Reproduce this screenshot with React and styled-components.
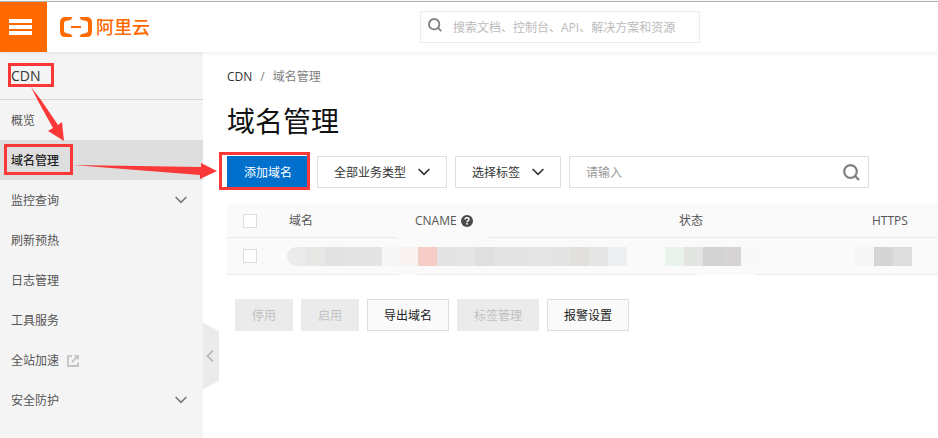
import React from 'react'
import styled, { createGlobalStyle } from 'styled-components'

const menu = [
  { label: '概览' },
  { label: '域名管理', active: true },
  { label: '监控查询', group: true },
  { label: '刷新预热' },
  { label: '日志管理' },
  { label: '工具服务' },
  { label: '全站加速', external: true },
  { label: '安全防护', group: true }
]

const domainBlocks = ['#ebebeb', '#e7e7e5', '#e2e2e2', '#e4e4e4', '#e4e4e4', '#f6f6f6']
const cnameBlocks = ['#f8f2f0', '#f6ccc6', '#e4e4e4', '#e6e6e6', '#dfdfdf', '#e4e4e4', '#e4e4e4', '#e5e5e5', '#e3e3e3', '#e1e0dc', '#e6e6e6', '#edeff1']
const statusBlocks = ['#e9f3ec', '#e2e5e1', '#d2d2d2', '#d6d3d4', '#f8f8f8']
const httpsBlocks = ['#f6f6f6', '#d5d5d5', '#dddddd']

function Chevron () {
  return (
    <svg width='12' height='8' viewBox='0 0 12 8' fill='none' stroke='currentColor' strokeWidth='1.6' aria-hidden='true'>
      <path d='M0.6 1 L6 6.4 L11.4 1' />
    </svg>
  )
}

function Magnifier () {
  return (
    <svg width='17' height='17' viewBox='0 0 17 17' fill='none' stroke='currentColor' strokeWidth='2.2' aria-hidden='true'>
      <circle cx='7.5' cy='7.5' r='6.3' />
      <path d='M11.8 11.8 L16 16' />
    </svg>
  )
}

function Logo () {
  return (
    <svg width='32' height='20' viewBox='0 0 32 20' fill='#ff6a00' aria-hidden='true'>
      <path d='M12.5 0 H5.5 Q0 0 0 5.5 V14.5 Q0 20 5.5 20 H12.5 L11 17.2 L5.8 16 Q4 15.5 4 14 V6 Q4 4.5 5.8 4 L11 2.8 Z' />
      <path d='M19.5 0 H26.5 Q32 0 32 5.5 V14.5 Q32 20 26.5 20 H19.5 L21 17.2 L26.2 16 Q28 15.5 28 14 V6 Q28 4.5 26.2 4 L21 2.8 Z' />
      <rect x='11' y='9' width='10' height='2' />
    </svg>
  )
}

function External () {
  return (
    <svg width='12' height='12' viewBox='0 0 12 12' fill='none' stroke='#c4c4c4' strokeWidth='1.8' aria-hidden='true'>
      <path d='M5 1.2 H1 V11 H11 V7.4' />
      <path d='M5 7 L10.6 1.4 M7.4 0.9 H11.1 V4.6' />
    </svg>
  )
}

function Redacted ({ blocks, start, soft }) {
  return (
    <Mosaic $start={start} $soft={soft}>
      {blocks.map((color, i) => <Block key={i} $color={color} />)}
    </Mosaic>
  )
}

function Filter ({ label, options }) {
  return (
    <SelectWrap>
      <Select aria-label={label}>
        {options.map(option => <option key={option}>{option}</option>)}
      </Select>
      <Chevron />
    </SelectWrap>
  )
}

function Annotations () {
  return (
    <Overlay width='320' height='200' viewBox='0 0 320 200' aria-hidden='true'>
      <g fill='none' stroke='#fb3838' strokeWidth='3'>
        <rect x='9.5' y='64.5' width='43' height='21' />
        <rect x='5.5' y='145.5' width='66' height='28' />
        <rect x='220.5' y='153.5' width='88' height='35' />
      </g>
      <g fill='#fb3838'>
        <polygon points='31,87 41,100 58,125 62,122 64,141 48,131 53,128 38,101' />
        <polygon points='73,165 201,167 201,163 217,171 200,179 200,175' />
      </g>
    </Overlay>
  )
}

export default function App () {
  return (
    <Page>
      <GlobalStyle />
      <Header>
        <MenuButton type='button' aria-label='菜单'>
          <span /><span /><span />
        </MenuButton>
        <Brand>
          <BrandLink href='#home'><Logo />阿里云</BrandLink>
        </Brand>
        <HeaderSearch>
          <Magnifier />
          <input type='search' aria-label='搜索' placeholder='搜索文档、控制台、API、解决方案和资源' />
        </HeaderSearch>
      </Header>
      <Body>
        <Sidebar>
          <Product>CDN</Product>
          <nav>
            {menu.map(item => (
              <MenuItem key={item.label} href='#menu' $active={item.active}>
                {item.label}
                {item.external && <External />}
                {item.group && <Push><Chevron /></Push>}
              </MenuItem>
            ))}
          </nav>
          <Collapse type='button' aria-label='收起'>
            <svg width='8' height='12' viewBox='0 0 8 12' fill='none' stroke='#b5b5b5' strokeWidth='1.5'>
              <path d='M7 0.6 L1.4 6 L7 11.4' />
            </svg>
          </Collapse>
        </Sidebar>
        <Main>
          <Breadcrumb>
            <a href='#cdn'>CDN</a>
            <span>/</span>
            <span>域名管理</span>
          </Breadcrumb>
          <Title>域名管理</Title>
          <Toolbar>
            <Button type='button' $primary>添加域名</Button>
            <Filter label='业务类型' options={['全部业务类型']} />
            <Filter label='标签' options={['选择标签']} />
            <TableSearch>
              <input type='text' aria-label='域名' placeholder='请输入' />
              <button type='button' aria-label='查询'><Magnifier /></button>
            </TableSearch>
          </Toolbar>
          <Table>
            <colgroup>
              <col width='46' />
              <col width='126' />
              <col width='264' />
              <col width='193' />
              <col />
            </colgroup>
            <thead>
              <tr>
                <Th><Checkbox type='checkbox' aria-label='全选' /></Th>
                <Th>域名</Th>
                <Th>
                  <Help>
                    CNAME
                    <svg width='12' height='12' viewBox='0 0 12 12' aria-hidden='true'>
                      <circle cx='6' cy='6' r='6' fill='#4a4a4a' />
                      <path d='M4 4.6 Q4 2.8 6 2.8 Q8 2.8 8 4.4 Q8 5.4 6.9 5.9 Q6 6.3 6 7.2' fill='none' stroke='#fff' strokeWidth='1.4' />
                      <rect x='5.2' y='8' width='1.6' height='1.6' fill='#fff' />
                    </svg>
                  </Help>
                  <Smudge $left={-2} $width={89} />
                </Th>
                <Th>状态</Th>
                <Th>HTTPS</Th>
              </tr>
            </thead>
            <tbody>
              <tr>
                <Td $check><Checkbox type='checkbox' aria-label='选择域名' /></Td>
                <Td><Redacted blocks={domainBlocks} start={14} soft /></Td>
                <Td><Redacted blocks={cnameBlocks} start={0} /><Smudge $left={0} $width={18} /></Td>
                <Td><Redacted blocks={statusBlocks} start={2} /><Smudge $left={34} $width={59} /></Td>
                <Td><Redacted blocks={httpsBlocks} start={-1} /></Td>
              </tr>
            </tbody>
          </Table>
          <Actions>
            <Button type='button' disabled>停用</Button>
            <Button type='button' disabled>启用</Button>
            <Button type='button'>导出域名</Button>
            <Button type='button' disabled>标签管理</Button>
            <Button type='button'>报警设置</Button>
          </Actions>
        </Main>
      </Body>
      <Annotations />
    </Page>
  )
}

const GlobalStyle = createGlobalStyle`
  * {
    box-sizing: border-box;
  }

  body {
    background-color: #fff;
    color: #333;
    font-family: 'Open Sans', 'Noto Sans CJK SC', sans-serif;
    font-size: 12px;
    line-height: 16px;
    margin: 0;
  }

  button, input, select {
    border-radius: 0;
    font: inherit;
    margin: 0;
  }

  a {
    color: inherit;
    text-decoration: none;
  }

  svg {
    display: block;
    flex: none;
  }
`

const Page = styled.div`
  display: flex;
  flex-direction: column;
  min-height: 100vh;
  padding-top: 1px;
  position: relative;
`

const Header = styled.header`
  align-items: center;
  border-top: 1px solid #b0b0b0;
  box-shadow: 0 1px 4px rgba(0, 0, 0, 0.08);
  display: flex;
  height: 51px;
  position: relative;
  z-index: 1;
`

const MenuButton = styled.button`
  align-items: flex-start;
  align-self: stretch;
  background-color: #ff6a00;
  border: 0;
  display: flex;
  flex: none;
  flex-direction: column;
  gap: 2px;
  justify-content: center;
  padding: 0 0 0 9px;
  width: 47px;

  span {
    background-color: #fff;
    height: 4px;
    width: 23px;
  }
`

const Brand = styled.div`
  flex: 0 0 373px;
  padding: 2px 0 0 13px;
`

const BrandLink = styled.a`
  align-items: center;
  color: #ff6a00;
  display: inline-flex;
  font-size: 18px;
  font-weight: 500;
  gap: 4px;
  line-height: 24px;
`

const HeaderSearch = styled.label`
  align-items: center;
  border: 1px solid #ebebeb;
  color: #808080;
  display: flex;
  gap: 11px;
  height: 32px;
  padding: 0 7px;
  width: 280px;

  svg {
    height: 14px;
    margin-bottom: 4px;
    width: 14px;
  }

  input {
    background: none;
    border: 0;
    flex: 1;
    min-width: 0;
    outline: 0;
    padding: 2px 0 0;
  }

  input::placeholder {
    color: #bbb;
  }
`

const Body = styled.div`
  display: flex;
  flex: 1;
`

const Sidebar = styled.aside`
  background-color: #f4f4f4;
  flex: none;
  position: relative;
  width: 203px;
`

const Product = styled.div`
  border-bottom: 1px solid #d9d9d9;
  font-size: 14px;
  line-height: 47px;
  padding-left: 11px;
`

const MenuItem = styled.a`
  align-items: center;
  background-color: ${props => props.$active ? '#dedede' : 'transparent'};
  color: ${props => props.$active ? '#222' : '#555'};
  display: flex;
  font-weight: ${props => props.$active ? 500 : 400};
  gap: 8px;
  height: 40px;
  padding: 2px 16px 0 11px;
`

const Push = styled.span`
  color: #777;
  margin: 0 0 2px auto;
`

const Collapse = styled.button`
  align-items: center;
  background-color: #ebebeb;
  border: 0;
  clip-path: polygon(0 0, 100% 12%, 100% 88%, 0 100%);
  display: flex;
  height: 66px;
  justify-content: center;
  left: 100%;
  padding: 0 2px 0 0;
  position: absolute;
  top: 271px;
  width: 16px;
`

const Main = styled.main`
  flex: 1;
  min-width: 0;
  padding: 17px 0 16px 24px;
`

const Breadcrumb = styled.div`
  color: #808080;
  display: flex;
  gap: 8px;

  a {
    color: #333;
  }
`

const Title = styled.h1`
  color: #111;
  font-size: 28px;
  font-weight: 400;
  line-height: 40px;
  margin: 16px 0 15px;
`

const Toolbar = styled.div`
  display: flex;
  gap: 8px;
  margin-bottom: 16px;
`

const Button = styled.button`
  background-color: ${props => props.$primary ? '#0070cc' : '#fafafa'};
  border: 1px solid ${props => props.$primary ? '#0070cc' : '#dedede'};
  color: ${props => props.$primary ? '#fff' : '#222'};
  flex: none;
  height: 32px;
  padding: 2px 16px 0;

  &:disabled {
    background-color: #ebebeb;
    border-color: #ebebeb;
    color: #c1c1c1;
  }
`

const SelectWrap = styled.span`
  align-items: center;
  color: #333;
  display: flex;
  flex: none;
  position: relative;

  svg {
    pointer-events: none;
    position: absolute;
    right: 17px;
  }
`

const Select = styled.select`
  appearance: none;
  background-color: #fff;
  border: 1px solid #dedede;
  color: #333;
  height: 32px;
  padding: 2px 39px 0 16px;
`

const TableSearch = styled.div`
  align-items: center;
  border: 1px solid #dedede;
  display: flex;
  height: 32px;
  padding: 0 8px 0 16px;
  width: 300px;

  input {
    background: none;
    border: 0;
    flex: 1;
    min-width: 0;
    outline: 0;
    padding: 2px 0 0;
  }

  input::placeholder {
    color: #999;
  }

  button {
    background: none;
    border: 0;
    color: #808080;
    padding: 0;
  }
`

const Table = styled.table`
  background-color: #fafafa;
  border-collapse: separate;
  border-spacing: 0;
  table-layout: fixed;
  width: 100%;
`

const Th = styled.th`
  border-bottom: 1px solid #ebebeb;
  color: #555;
  font-weight: 400;
  height: 34px;
  padding: 0 0 0 16px;
  position: relative;
  text-align: left;
`

const Td = styled.td`
  border-bottom: 1px solid #ebebeb;
  height: 37px;
  padding: ${props => props.$check ? '0 0 0 16px' : '0'};
  position: relative;
`

const Help = styled.span`
  align-items: center;
  display: flex;
  gap: 4px;
`

const Checkbox = styled.input`
  appearance: none;
  background-color: #fff;
  border: 1px solid #dedede;
  display: block;
  height: 14px;
  width: 14px;
`

const Mosaic = styled.div`
  border-radius: ${props => props.$soft ? '10px 0 0 10px' : '0'};
  display: flex;
  margin-left: ${props => props.$start}px;
  overflow: hidden;
`

const Block = styled.span`
  background-color: ${props => props.$color};
  flex: none;
  height: 19px;
  width: 19px;
`

// covers a stretch of the row border
const Smudge = styled.span`
  background-color: #fafafa;
  bottom: -1px;
  height: 2px;
  left: ${props => props.$left}px;
  position: absolute;
  width: ${props => props.$width}px;
`

const Actions = styled.div`
  display: flex;
  gap: 8px;
  padding: 24px 8px;
`

const Overlay = styled.svg`
  left: 0;
  pointer-events: none;
  position: absolute;
  top: 0;
  z-index: 2;
`
